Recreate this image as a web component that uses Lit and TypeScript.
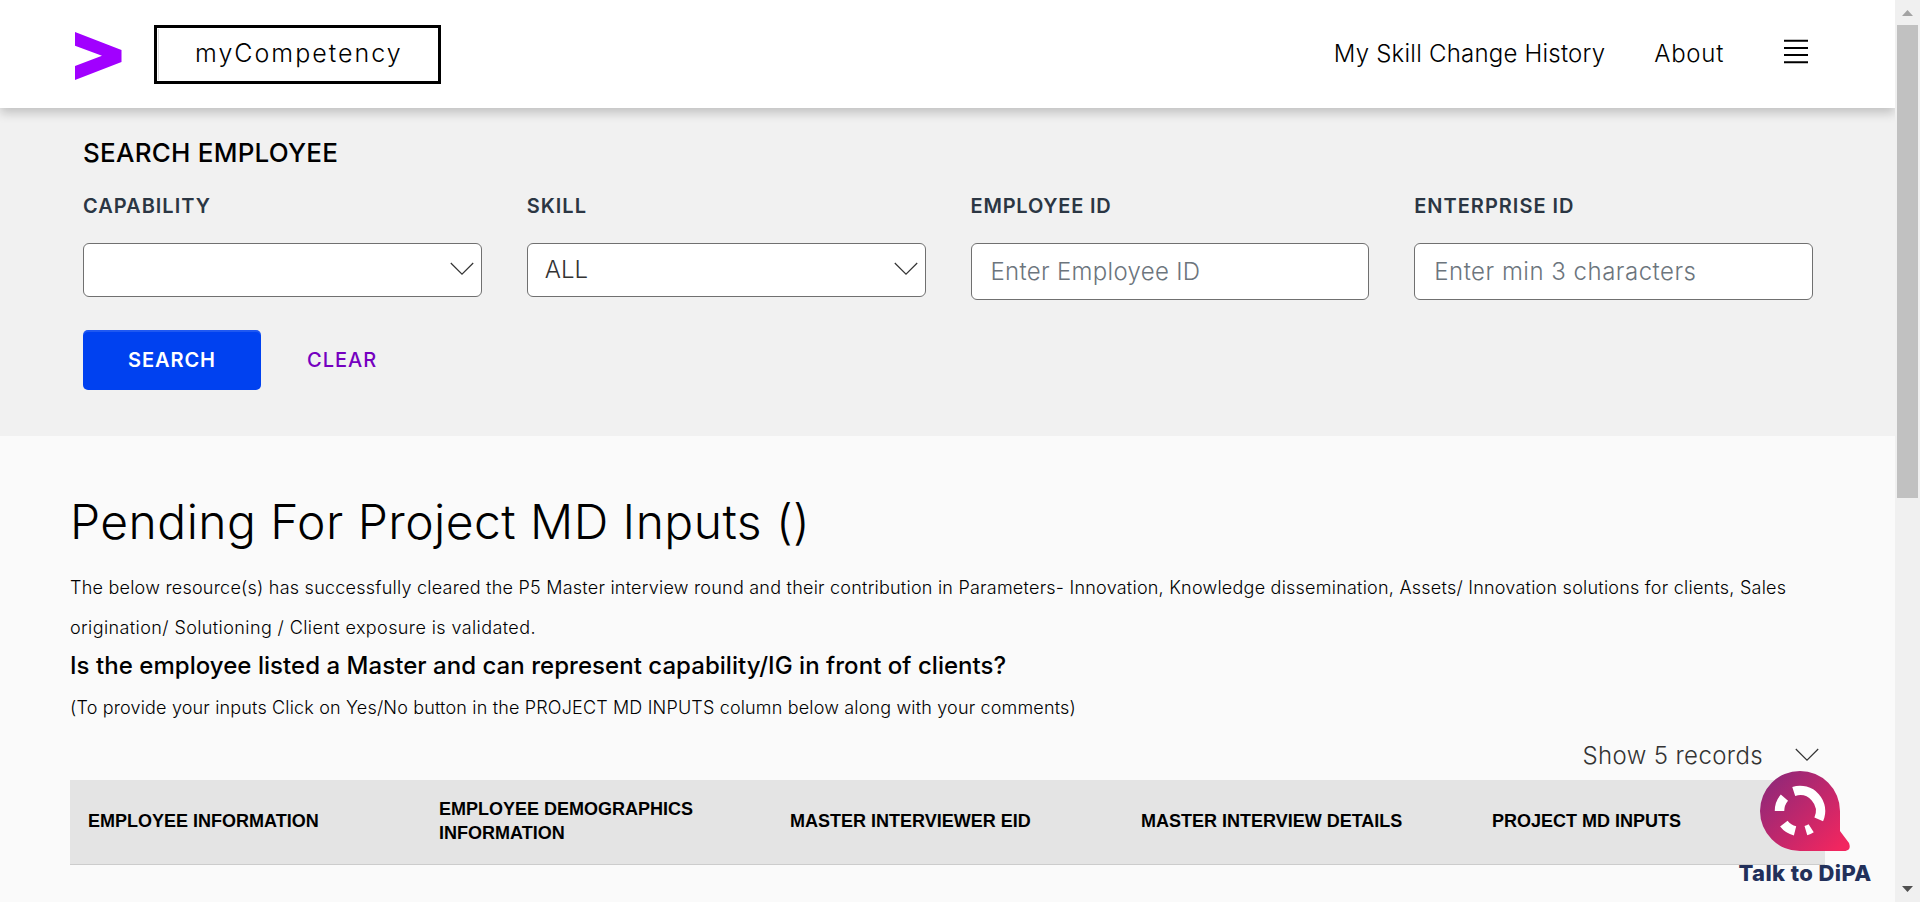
import { LitElement, html, svg, css } from "lit";
import { customElement, property } from "lit/decorators.js";

const chevron = html`<svg width="24" height="14" viewBox="0 0 24 14" fill="none" stroke="#333" stroke-width="1.2" aria-hidden="true">
  <path d="M.8 1 12 12.2 23.2 1" />
</svg>`;

/** Arc on the badge ring; angles run clockwise from twelve o'clock. */
function ringArc(from: number, to: number) {
  const r = 20.5;
  const at = (deg: number) => {
    const a = (deg * Math.PI) / 180;
    return `${(40 + r * Math.sin(a)).toFixed(2)} ${(40 - r * Math.cos(a)).toFixed(2)}`;
  };
  return svg`<path d=${`M${at(from)}A${r} ${r} 0 0 1 ${at(to)}`} />`;
}

@customElement("site-header")
export class SiteHeader extends LitElement {
  static styles = css`
    :host {
      display: flex;
      align-items: center;
      flex: none;
      height: 108px;
      padding: 0 87px 0 75px;
      box-sizing: border-box;
      background: #fff;
      box-shadow: 0 5px 10px rgba(0, 0, 0, 0.2);
      position: relative;
      z-index: 1;
      color: #000;
    }
    .logo { display: block; margin-top: 4px; }
    .product {
      box-sizing: border-box;
      width: 287px;
      height: 59px;
      margin-left: 32px;
      border: 3px solid #000;
      padding: 1px;
      display: flex;
    }
    .product-name {
      flex: 1;
      border-left: 1px solid #ddd;
      display: flex;
      align-items: center;
      padding: 0 0 2px 36px;
      font-size: 25px;
      letter-spacing: 2px;
    }
    nav { margin-left: auto; display: flex; align-items: center; }
    .link { font-size: 24px; line-height: 30px; letter-spacing: 0.22px; white-space: nowrap; }
    .about { margin-left: 49px; letter-spacing: 0.7px; }
    .menu { display: block; margin: -5px 0 0 60px; }
  `;
  render() {
    return html`
      <svg class="logo" width="47" height="48" viewBox="0 0 47 48" aria-label="Home">
        <path fill="#a100ff" d="M0 0 46.5 18V30L0 48V34L27 23.8 0 13.8Z" />
      </svg>
      <div class="product"><div class="product-name">myCompetency</div></div>
      <nav>
        <span class="link">My Skill Change History</span>
        <span class="link about">About</span>
        <svg class="menu" width="24" height="25" viewBox="0 0 24 25" stroke="#000" stroke-width="2" aria-label="Menu">
          <path d="M0 1.7H24M0 9H24M0 16H24M0 23.3H24" />
        </svg>
      </nav>`;
  }
}

@customElement("search-panel")
export class SearchPanel extends LitElement {
  static styles = css`
    :host {
      display: block;
      flex: none;
      height: 328px;
      box-sizing: border-box;
      padding: 29px 82px 0 83px;
      background: #f1f1f1;
    }
    .title { margin: 0; font-size: 26px; line-height: 32px; font-weight: 500; letter-spacing: 0.24px; color: #000; }
    .fields { display: grid; grid-template-columns: repeat(4, 1fr); gap: 45px; margin-top: 25px; }
    .label { display: block; font-size: 20px; line-height: 24px; font-weight: 600; letter-spacing: 1px; color: #2b3643; }
    .label.tight { letter-spacing: 0.8px; }
    .control {
      box-sizing: border-box;
      width: 100%;
      height: 54px;
      margin-top: 25px;
      border: 1px solid #707070;
      border-radius: 6px;
      background: #fff;
      font-size: 24px;
      display: flex;
      align-items: center;
      justify-content: space-between;
      padding: 0 7px 2px 17px;
      color: #333;
    }
    .input { height: 57px; padding: 0 19px; font-family: inherit; font-weight: inherit; letter-spacing: 0.3px; }
    .input.wide { letter-spacing: 0.5px; }
    .input::placeholder { color: #6c757d; opacity: 1; }
    .actions { display: flex; align-items: center; margin-top: 30px; }
    .btn {
      height: 60px;
      border: 0;
      border-radius: 5px;
      font: 600 20px Inter, sans-serif;
      letter-spacing: 0.9px;
      padding: 0;
      background: none;
    }
    .primary { width: 178px; background: #0041f0; color: #fff; box-shadow: inset 0 2px 0 rgba(255, 255, 255, 0.12); }
    .clear { margin-left: 46px; color: #7500c0; font-weight: 500; letter-spacing: 1px; }
  `;
  render() {
    return html`
      <h2 class="title">SEARCH EMPLOYEE</h2>
      <div class="fields">
        <div><span class="label">CAPABILITY</span><div class="control"><span></span>${chevron}</div></div>
        <div><span class="label">SKILL</span><div class="control"><span>ALL</span>${chevron}</div></div>
        <div><span class="label tight">EMPLOYEE ID</span><input class="control input" placeholder="Enter Employee ID" /></div>
        <div><span class="label">ENTERPRISE ID</span><input class="control input wide" placeholder="Enter min 3 characters" /></div>
      </div>
      <div class="actions">
        <button class="btn primary">SEARCH</button>
        <button class="btn clear">CLEAR</button>
      </div>`;
  }
}

@customElement("pending-inputs")
export class PendingInputs extends LitElement {
  static styles = css`
    :host { display: block; padding: 51px 70px 0; color: #000; }
    .title { margin: 0; font-size: 48px; line-height: 70px; font-weight: inherit; letter-spacing: 0.45px; }
    .text { margin: 11px 0 0; font-size: 18px; line-height: 40px; white-space: nowrap; }
    .line { display: block; letter-spacing: 0.23px; }
    .line.last { letter-spacing: 0.4px; }
    .question { margin: 0; font-size: 24px; line-height: 36px; font-weight: 500; letter-spacing: 0.04px; }
    .note { margin: 2px 0 0; font-size: 18px; line-height: 44px; letter-spacing: 0.165px; }
    .pager { display: flex; justify-content: flex-end; align-items: center; gap: 32px; height: 50px; padding-right: 6px; font-size: 24px; letter-spacing: 0.38px; color: #333; }
    .table {
      display: grid;
      grid-template-columns: repeat(5, 1fr);
      box-sizing: border-box;
      height: 85px;
      align-items: center;
      background: #e4e4e4;
      border-bottom: 1px solid #ccc;
      font: 700 18px/24px "Liberation Sans", Arial, sans-serif;
    }
    .cell { padding: 0 60px 2px 18px; }
  `;
  columns = [
    "EMPLOYEE INFORMATION",
    "EMPLOYEE DEMOGRAPHICS INFORMATION",
    "MASTER INTERVIEWER EID",
    "MASTER INTERVIEW DETAILS",
    "PROJECT MD INPUTS",
  ];
  render() {
    return html`
      <h1 class="title">Pending For Project MD Inputs ()</h1>
      <p class="text">
        <span class="line">The below resource(s) has successfully cleared the P5 Master interview round and their contribution in Parameters- Innovation, Knowledge dissemination, Assets/ Innovation solutions for clients, Sales</span>
        <span class="line last">origination/ Solutioning / Client exposure is validated.</span>
      </p>
      <p class="question">Is the employee listed a Master and can represent capability/IG in front of clients?</p>
      <p class="note">(To provide your inputs Click on Yes/No button in the PROJECT MD INPUTS column below along with your comments)</p>
      <div class="pager"><span>Show 5 records</span>${chevron}</div>
      <div class="table">${this.columns.map((c) => html`<div class="cell">${c}</div>`)}</div>`;
  }
}

@customElement("chat-launcher")
export class ChatLauncher extends LitElement {
  static styles = css`
    :host { display: flex; flex-direction: column; align-items: center; }
    .badge { display: block; }
    .caption { margin-top: 9px; font-size: 22px; line-height: 27px; font-weight: 800; letter-spacing: 0.4px; color: #22305a; white-space: nowrap; }
  `;
  render() {
    return html`
      <svg class="badge" width="90" height="80" viewBox="0 0 90 80" aria-hidden="true">
        <defs>
          <linearGradient id="fill" x1="8" y1="10" x2="78" y2="80" gradientUnits="userSpaceOnUse">
            <stop offset="0" stop-color="#922878" />
            <stop offset="1" stop-color="#f2265f" />
          </linearGradient>
        </defs>
        <path fill="url(#fill)" d="M40 0A40 40 0 0 1 80 40V60L89 72Q91.500 79 85.500 80H40A40 40 0 0 1 40 0Z" />
        <g fill="none" stroke="#fff" stroke-width="9.500">
          ${ringArc(-17.8, 114)} ${ringArc(147, 163.300)} ${ringArc(194, 232)} ${ringArc(270, 310.500)}
        </g>
      </svg>
      <span class="caption">Talk to DiPA</span>`;
  }
}

@customElement("scroll-track")
export class ScrollTrack extends LitElement {
  static styles = css`
    :host { display: flex; flex-direction: column; align-items: center; width: 25px; background: #f0f0f0; }
    .arrow { display: block; flex: none; }
    .thumb { width: 21px; height: 473px; flex: none; background: #c1c1c1; }
    .down { margin-top: auto; }
  `;
  render() {
    return html`
      <svg class="arrow" width="25" height="25" viewBox="0 0 25 25"><path fill="#a3a3a3" d="M7 16 12.500 10 18 16Z" /></svg>
      <div class="thumb"></div>
      <svg class="arrow down" width="25" height="25" viewBox="0 0 25 25"><path fill="#505050" d="M7 9H18L12.500 15Z" /></svg>`;
  }
}

@customElement("app-root")
export class AppRoot extends LitElement {
  static styles = css`
    :host {
      display: flex;
      height: 902px;
      overflow: hidden;
      position: relative;
      background: #fafafa;
      font-family: Inter, sans-serif;
      font-weight: 350;
    }
    .page { width: 1895px; display: flex; flex-direction: column; overflow: hidden; }
    .chat { position: absolute; left: 1739px; top: 771px; width: 132px; }
  `;
  render() {
    return html`
      <main class="page">
        <site-header></site-header>
        <search-panel></search-panel>
        <pending-inputs></pending-inputs>
      </main>
      <scroll-track></scroll-track>
      <chat-launcher class="chat"></chat-launcher>`;
  }
}
